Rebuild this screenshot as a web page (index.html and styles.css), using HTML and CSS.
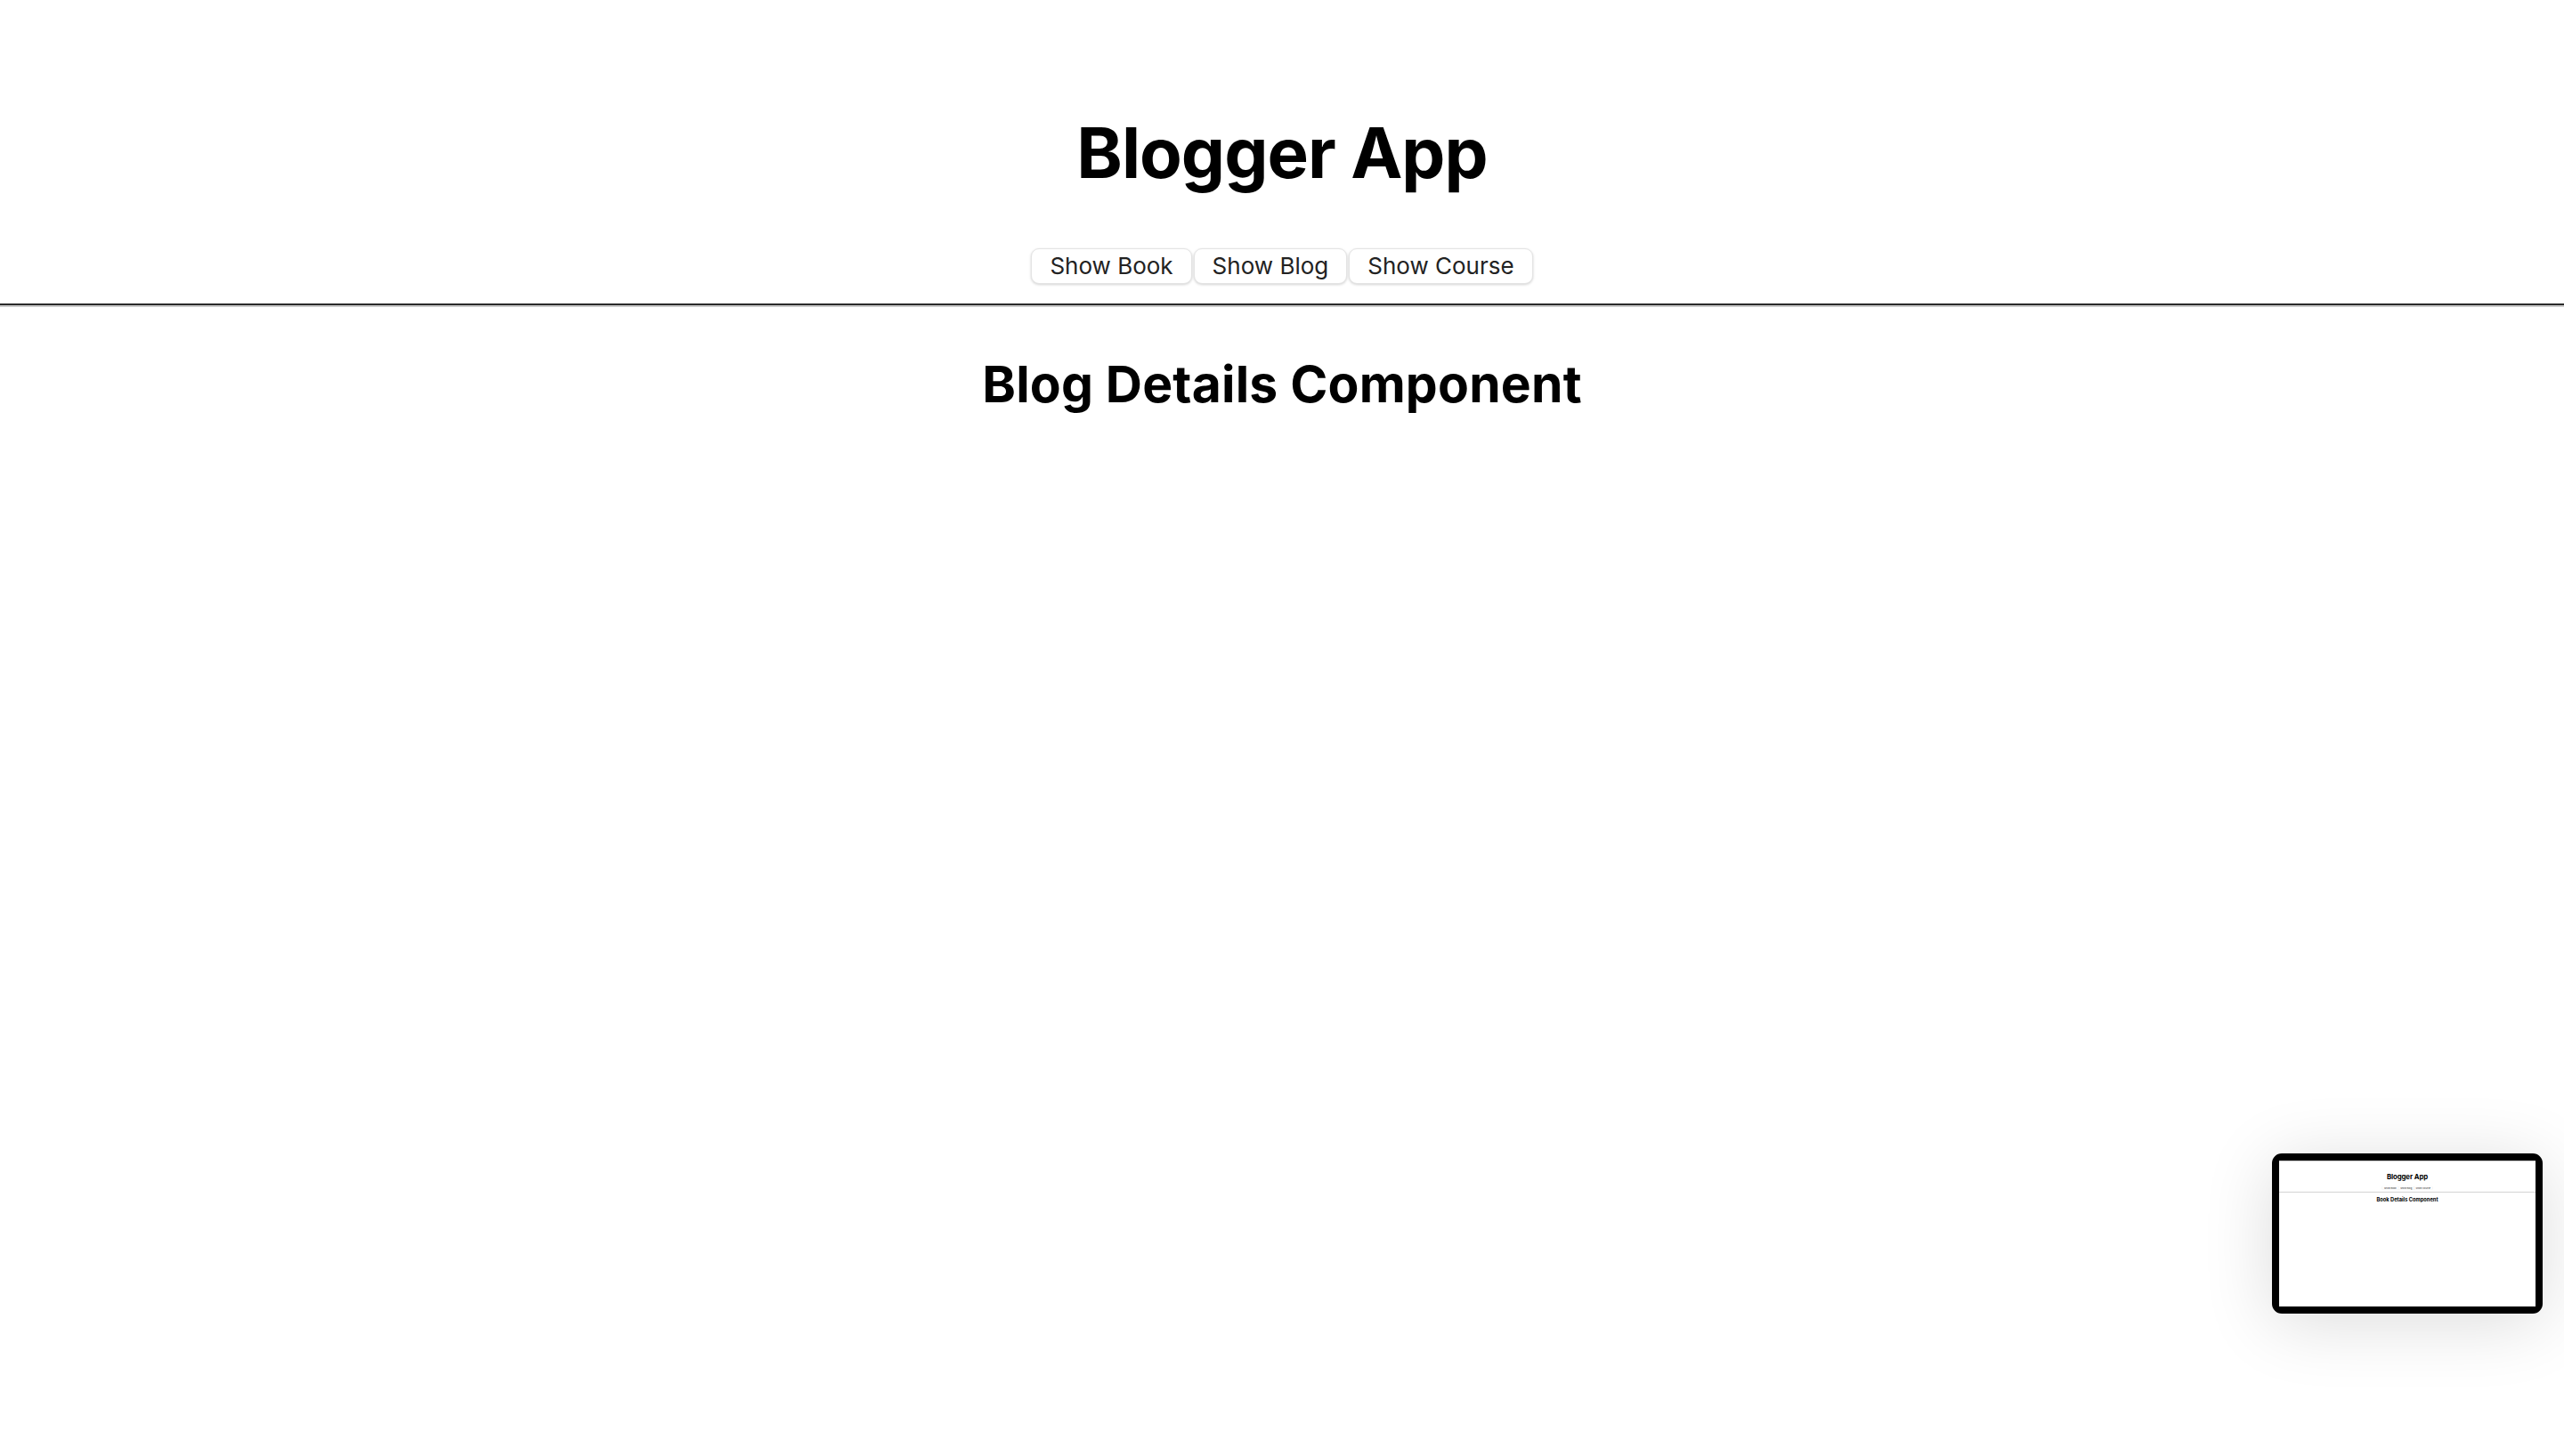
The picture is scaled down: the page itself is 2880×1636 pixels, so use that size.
FILE: index.html
```html
<!DOCTYPE html>
<html lang="en">
<head>
<meta charset="utf-8">
<title>Blogger App</title>
<link rel="stylesheet" href="styles.css">
</head>
<body>
<div class="app">
  <h1 class="title">Blogger App</h1>
  <div class="nav">
    <button class="btn">Show Book</button>
    <button class="btn">Show Blog</button>
    <button class="btn">Show Course</button>
  </div>
  <hr class="divider">
  <h2 class="subtitle">Blog Details Component</h2>
</div>

<div class="preview">
  <div class="preview-screen">
    <div class="app mini">
      <h1 class="title">Blogger App</h1>
      <div class="nav">
        <button class="btn">Show Book</button>
        <button class="btn">Show Blog</button>
        <button class="btn">Show Course</button>
      </div>
      <hr class="divider">
      <h2 class="subtitle">Book Details Component</h2>
    </div>
  </div>
</div>
</body>
</html>
```

FILE: styles.css
```css
html, body {
  margin: 0;
  padding: 0;
  background: #ffffff;
}

body {
  font-family: Inter, "Noto Sans", "Liberation Sans", sans-serif;
  color: #000;
}

.app {
  text-align: center;
  padding-top: 1px;
}

.title {
  font-size: 78px;
  line-height: 94px;
  font-weight: 700;
  margin: 124px 0 60px;
  letter-spacing: -1px;
}

.nav {
  display: flex;
  justify-content: center;
  gap: 2px;
  margin-bottom: 22px;
}

.btn {
  font-family: Inter, "Noto Sans", "Liberation Sans", sans-serif;
  font-size: 26px;
  line-height: 38px;
  height: 40px;
  padding: 0 20px;
  color: #222;
  background: #fff;
  border: 1px solid #e4e4e4;
  border-radius: 9px;
  box-shadow: 0 1px 3px rgba(0, 0, 0, 0.18);
}

.divider {
  margin: 0;
  height: 0;
  border: 0;
  border-top: 2px solid #2b2b2b;
  border-bottom: 2px solid #cbcbcb;
}

.subtitle {
  font-size: 57px;
  line-height: 69px;
  font-weight: 700;
  margin: 52px 0 0;
  letter-spacing: 0.2px;
}

.preview {
  position: fixed;
  left: 2552px;
  top: 1296px;
  width: 288px;
  height: 164px;
  border: 8px solid #000;
  border-radius: 11px;
  background: #000;
  box-shadow: 0 10px 80px rgba(0, 0, 0, 0.14);
}

.preview-screen {
  width: 288px;
  height: 164px;
  overflow: hidden;
  background: #fff;
  border-top: 1px solid #c8c8c8;
  box-sizing: border-box;
}

.mini {
  width: 2880px;
  height: 1640px;
  transform: scale(0.1);
  transform-origin: 0 0;
}
```
